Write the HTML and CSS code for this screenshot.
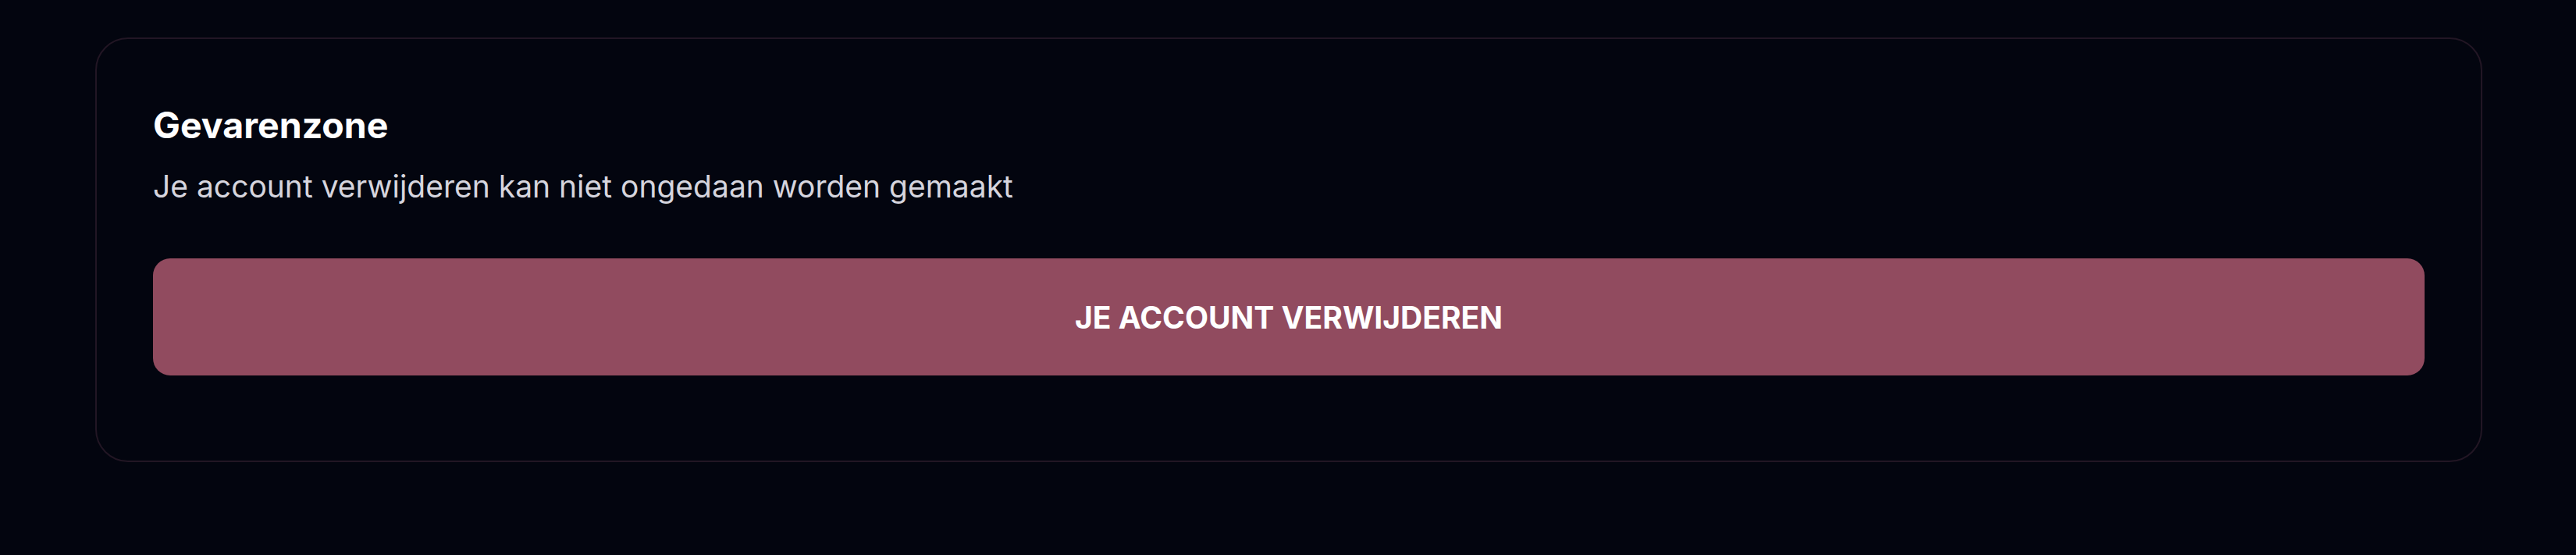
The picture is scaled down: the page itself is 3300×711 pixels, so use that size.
FILE: index.html
```html
<!DOCTYPE html>
<html>
<head>
	<title>Gevarenzone</title>
	<link rel="stylesheet" href="styles.css">
</head>
<body>
	<div class="page">
		<section class="danger-card">
			<h2 class="danger-title">Gevarenzone</h2>
			<p class="danger-text">Je account verwijderen kan niet ongedaan worden gemaakt</p>
			<button class="btn-danger">Je account verwijderen</button>
		</section>
	</div>
</body>
</html>
```

FILE: styles.css
```css
body {
	background-color: #03050f;
	font-family: Inter, "Noto Sans", sans-serif;
	color: #fff;
	margin: 0;
	padding: 0;
}

.page {
	padding: 48px 120px 120px 122px;
}

.danger-card {
	border: 2px solid #221624;
	border-radius: 42px;
	padding: 76px 72px 109px 72px;
}

.danger-title {
	margin: 0;
	font-size: 46.5px;
	font-weight: 700;
	line-height: 69px;
	color: #fff;
}

.danger-text {
	margin: 15px 0 0 0;
	font-size: 39px;
	line-height: 57px;
	color: #d6d5de;
}

.btn-danger {
	display: block;
	width: 100%;
	height: 150px;
	margin-top: 64px;
	background-color: #914b5f;
	color: #fff;
	border: none;
	border-radius: 22px;
	font-family: Inter, "Noto Sans", sans-serif;
	font-size: 39px;
	font-weight: 700;
	text-transform: uppercase;
	cursor: pointer;
}
```
